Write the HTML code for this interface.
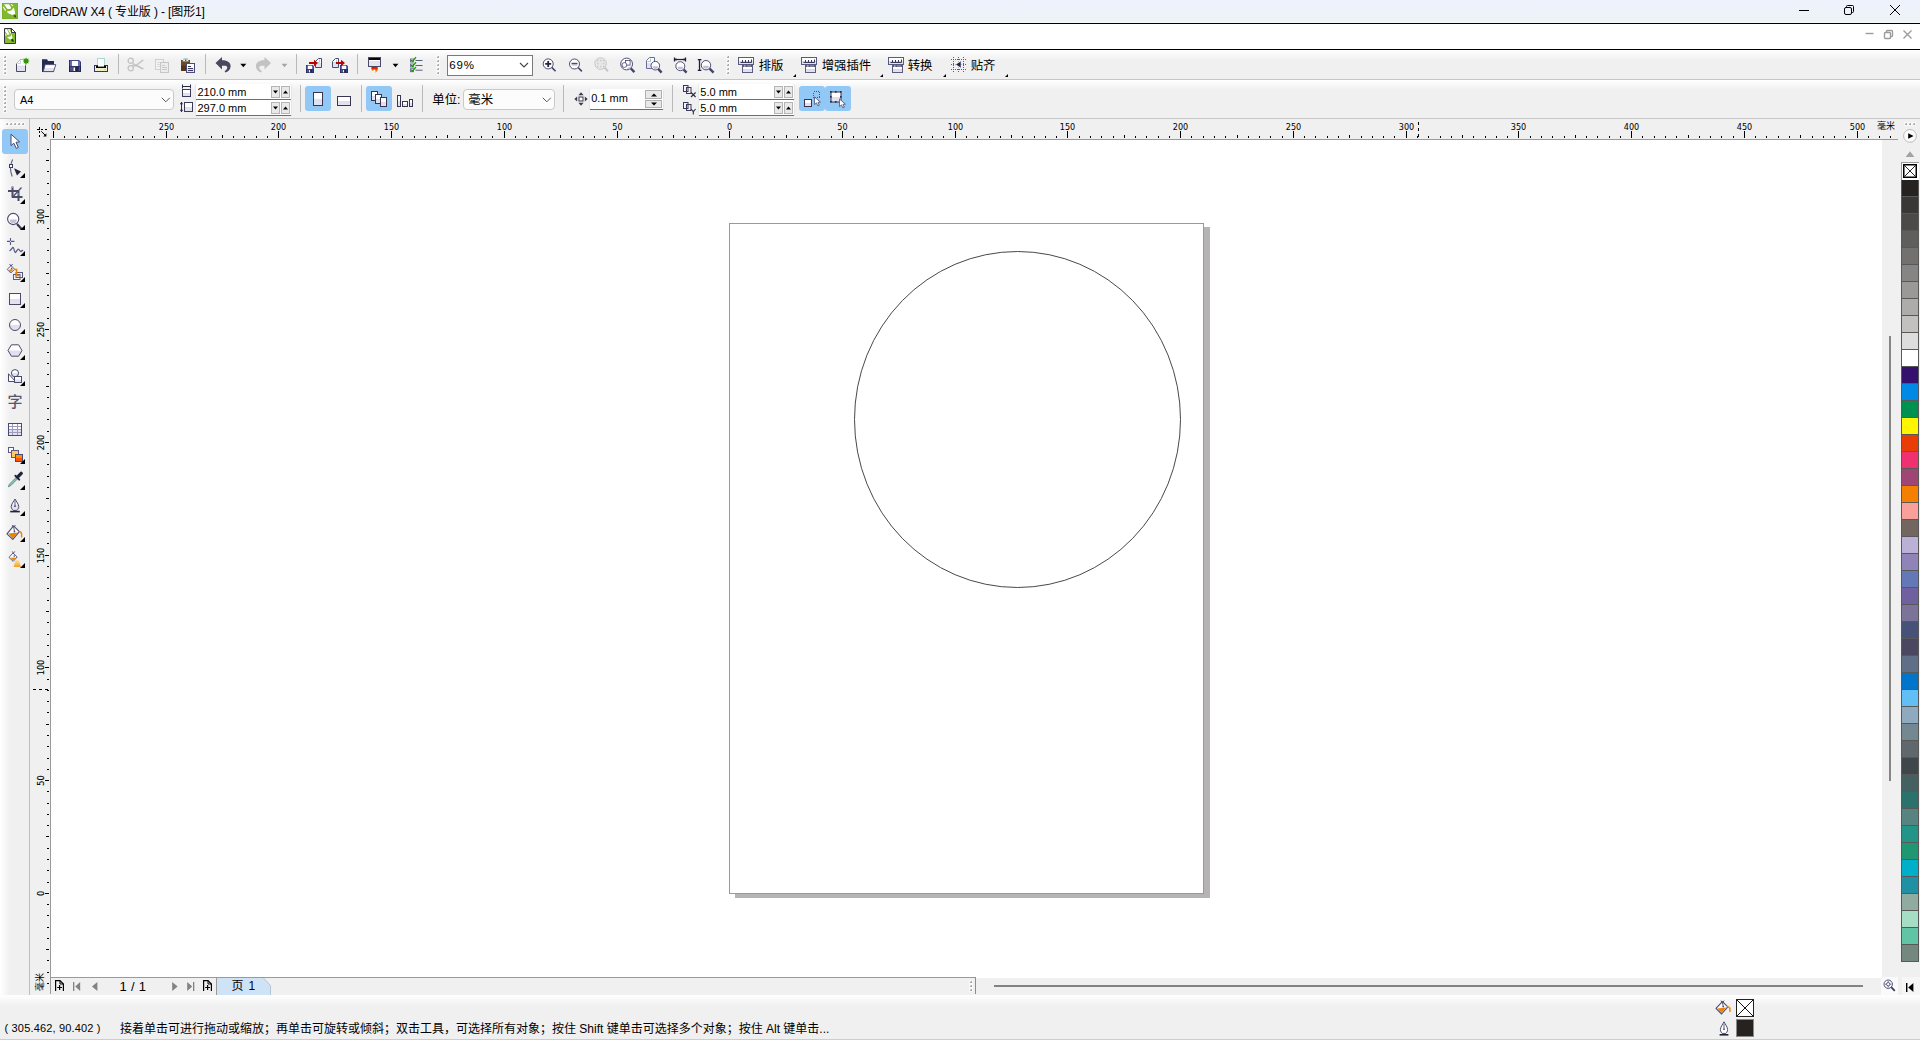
<!DOCTYPE html>
<html lang="zh-CN"><head><meta charset="utf-8"><title>CorelDRAW X4</title>
<style>
*{box-sizing:border-box;margin:0;padding:0}
html,body{width:1920px;height:1040px;overflow:hidden}
body{position:relative;background:#f0f0f0;font-family:"Liberation Sans","Noto Sans CJK SC",sans-serif;font-size:12px;color:#000}
.a{position:absolute}
.t{position:absolute;white-space:nowrap;line-height:1}
svg{position:absolute;overflow:visible}
.sep{position:absolute;width:1px;background:#b9b9b9}
.grip i{position:absolute;width:2px;height:2px;background:#b4b4b4}
</style></head>
<body>
<div class="a" style="left:0px;top:0px;width:1920px;height:23px;background:linear-gradient(#eef2fb 0,#eef3fa 12px,#edf3f6 21px,#f6f9fb 23px)"></div>
<div class="a" style="left:0px;top:23px;width:1920px;height:1px;background:#000"></div>
<div class="a" style="left:0px;top:24px;width:1920px;height:25px;background:#fff"></div>
<div class="a" style="left:0px;top:49px;width:1920px;height:1px;background:#000"></div>
<div class="a" style="left:0px;top:50px;width:1920px;height:29px;background:linear-gradient(#fff 0,#f0f0f0 10px)"></div>
<div class="a" style="left:0px;top:79px;width:1920px;height:1px;background:#c6c6c6"></div>
<div class="a" style="left:0px;top:80px;width:1920px;height:38px;background:linear-gradient(#fff 0,#f0f0f0 10px)"></div>
<div class="a" style="left:0px;top:118px;width:1920px;height:1px;background:#c6c6c6"></div>
<div class="a" style="left:0px;top:119px;width:29px;height:876px;background:linear-gradient(90deg,#fff 0,#f0f0f0 10px)"></div>
<div class="a" style="left:29px;top:119px;width:1px;height:876px;background:#bdbdbd"></div>
<div class="a" style="left:50px;top:139px;width:1832px;height:839px;background:#fff;border-left:1px solid #9a9a9a;border-top:1px solid #9a9a9a;border-bottom:1px solid #9a9a9a"></div>
<svg style="left:2px;top:3px" width="16" height="16" viewBox="0 0 16 16"><rect x="0" y="0" width="16" height="16" fill="#74ad1e"/><rect x="0.6" y="0.6" width="14.8" height="14.8" fill="#82b730"/><path d="M2 1.2 H7 L9 4.3 L8.8 5.7 L5.5 5.9 Z" fill="#fff"/><path d="M9.2 1.1 L11.3 2.4 L10.7 3.2 L8.7 1.8 Z" fill="#fff"/><path d="M1.5 3.5 L4.1 7.3 L3.2 7.9 L0.9 4.2 Z" fill="#fff"/><path d="M5.1 8.2 L9.5 7.6 L11.5 4.5 L12.2 5.7 L13.2 10.7 L10.3 12 L5.7 9.9 Z" fill="#fff"/><path d="M11.4 12.4 L13.6 11.9 L14.2 14.6 L12.6 14.2 Z" fill="#33421a"/></svg>
<div class="t" style="left:23.5px;top:6px;font-size:12px;letter-spacing:-0.13px">CorelDRAW X4 ( 专业版 ) - [图形1]</div>
<svg style="left:1794px;top:0px" width="126" height="23" viewBox="0 0 126 23"><g stroke="#000" stroke-width="1" fill="none"><path d="M5 10.5 H15"/><rect x="50.5" y="7.5" width="7" height="7" rx="1.5"/><path d="M52.5 7.5 V6.5 Q52.5 5.5 53.5 5.5 H58.5 Q59.5 5.5 59.5 6.5 V11.5 Q59.5 12.5 58.5 12.5 H57.5"/><path d="M96 5 L106 15 M106 5 L96 15"/></g></svg>
<svg style="left:4px;top:28px" width="12" height="16" viewBox="0 0 12 16"><path d="M0.5 0.5 H7.5 L11.5 4.5 V15.5 H0.5 Z" fill="#82bb2e" stroke="#38383e" stroke-width="1"/><path d="M7.5 0.5 V4.5 H11.5 Z" fill="#fff" stroke="#38383e" stroke-width="1" stroke-linejoin="round"/><path d="M1.2 1.2 H3 L5.6 6.4 L3.6 7 L1.2 3.4 Z" fill="#fff"/><path d="M3.8 1.2 H5.6 L6.9 4.6 L6.5 6 Z" fill="#fff"/><path d="M1.2 4.8 L3 7.6 L1.2 7.8 Z" fill="#fff" opacity="0.8"/><path d="M3 9 L6.4 8.4 L7.6 6 L8.5 10 L7.6 11.6 L5.4 11.2 Z" fill="#fff"/><path d="M6.8 11.4 L9 11 L10 13.8 L8 13.6 Z" fill="#26330f"/></svg>
<svg style="left:1860px;top:26px" width="56" height="16" viewBox="0 0 56 16"><g stroke="#9c9c9c" stroke-width="1.4" fill="none"><path d="M5.5 7.5 H13.5"/><rect x="24.5" y="6.5" width="6" height="6" rx="1"/><path d="M26.5 6.5 V5.5 Q26.5 4.5 27.5 4.5 H31.5 Q32.5 4.5 32.5 5.5 V9.5 Q32.5 10.5 31.5 10.5 H30.5"/><path d="M43.5 4.5 L51.5 12.5 M51.5 4.5 L43.5 12.5"/></g></svg>
<svg width="0" height="0" style="left:0;top:0"><defs>
<linearGradient id="gPage" x1="0" y1="0" x2="0" y2="1"><stop offset="0.45" stop-color="#fff"/><stop offset="0.55" stop-color="#dedeee"/><stop offset="1" stop-color="#e4e4f0"/></linearGradient>
<linearGradient id="gGray" x1="0" y1="0" x2="0" y2="1"><stop offset="0.5" stop-color="#fff"/><stop offset="0.55" stop-color="#d8d8e4"/><stop offset="1" stop-color="#e6e6ee"/></linearGradient>
<linearGradient id="gFlame" x1="0" y1="0" x2="0" y2="1"><stop offset="0" stop-color="#e00000"/><stop offset="0.5" stop-color="#ff5a00"/><stop offset="1" stop-color="#ffe000"/></linearGradient>
<linearGradient id="gLens" x1="0" y1="0" x2="0" y2="1"><stop offset="0.5" stop-color="#fff"/><stop offset="0.55" stop-color="#c8c8d8"/><stop offset="1" stop-color="#dcdce8"/></linearGradient>
</defs></svg>
<div class="a grip" style="left:4px;top:56px;width:3px;height:20px"><i style="left:0px;top:0px;background:#ababab;box-shadow:0 0 0 1px rgba(255,255,255,.55)"></i><i style="left:0px;top:0px;width:1px;height:1px;background:#dcdcdc"></i><i style="left:0px;top:4px;background:#ababab;box-shadow:0 0 0 1px rgba(255,255,255,.55)"></i><i style="left:0px;top:4px;width:1px;height:1px;background:#dcdcdc"></i><i style="left:0px;top:8px;background:#ababab;box-shadow:0 0 0 1px rgba(255,255,255,.55)"></i><i style="left:0px;top:8px;width:1px;height:1px;background:#dcdcdc"></i><i style="left:0px;top:12px;background:#ababab;box-shadow:0 0 0 1px rgba(255,255,255,.55)"></i><i style="left:0px;top:12px;width:1px;height:1px;background:#dcdcdc"></i><i style="left:0px;top:16px;background:#ababab;box-shadow:0 0 0 1px rgba(255,255,255,.55)"></i><i style="left:0px;top:16px;width:1px;height:1px;background:#dcdcdc"></i></div>
<svg style="left:15px;top:56px" width="16" height="18" viewBox="0 0 16 18"><path d="M1.5 7.5 L5.5 3.5 H10.5 V15.5 H1.5 Z" fill="url(#gPage)" stroke="#4a4560" stroke-width="1"/><path d="M1.5 8 V7.5 L5.5 3.5 H10.5 V9.5" fill="none" stroke="#b4b4d8" stroke-width="1"/><path d="M2.5 7.5 H5.5 V4.5" fill="none" stroke="#bcd8d4" stroke-width="1"/><path d="M11.10 1.30 L11.90 3.06 L13.72 2.38 L13.04 4.20 L14.80 5.00 L13.04 5.80 L13.72 7.62 L11.90 6.94 L11.10 8.70 L10.30 6.94 L8.48 7.62 L9.16 5.80 L7.40 5.00 L9.16 4.20 L8.48 2.38 L10.30 3.06 Z" fill="#2f9600"/></svg>
<svg style="left:41px;top:56px" width="16" height="18" viewBox="0 0 16 18"><path d="M1 3.2 H6 L7 5 H13 V16 H1 Z" fill="#232b50"/><path d="M2.2 15.6 L4.2 8.6 H14.8 L12.6 15.6 Z" fill="url(#gPage)" stroke="#4a4a74" stroke-width="0.9"/></svg>
<svg style="left:69px;top:60px" width="12" height="12" viewBox="0 0 12 12"><g transform="translate(0,0) scale(1.0)"><path d="M0 0 H10 L12 2 V12 H0 Z" fill="#1f2450"/><path d="M0.8 0.6 H9.8 L11.3 2.1 V6 H0.8 Z" fill="#6a6ab8"/><rect x="3" y="1" width="6" height="5" fill="#fff"/><rect x="1" y="6.6" width="10" height="4.6" fill="#50508a"/><rect x="6.5" y="6.6" width="3.2" height="4.6" fill="#1f2850"/><rect x="4.6" y="7.6" width="1.4" height="3.4" fill="#fff"/></g></svg>
<svg style="left:93px;top:56px" width="16" height="18" viewBox="0 0 16 18"><rect x="4.5" y="2.5" width="7" height="8" fill="#fff" stroke="#a8d8d0" stroke-width="1"/><rect x="1.5" y="9.5" width="13" height="6" fill="#eeeecc" stroke="#3a3658" stroke-width="1"/><rect x="3" y="10" width="10" height="2" fill="#08080c"/><rect x="5" y="9" width="6" height="1.6" fill="#fff"/><rect x="11.4" y="13" width="1.4" height="1.2" fill="#f0d000"/></svg>
<div class="sep" style="left:118px;top:54px;height:20px"></div>
<svg style="left:126px;top:56px" width="20" height="18" viewBox="0 0 20 18"><g fill="none" stroke="#c2c2c2" stroke-width="1.3"><circle cx="4.7" cy="4.8" r="2.6"/><circle cx="4.7" cy="12.2" r="2.6"/></g><path d="M6.6 6.5 L10 8.5 L16.5 3.6 L18 4.4 L10.5 10 L6.4 10.7 Z" fill="#c9c9c9"/><path d="M6.6 10.5 L10 8.3 L18 12.6 L16.4 13.5 L10 10.2 Z" fill="#c2c2c2"/></svg>
<svg style="left:154px;top:56px" width="16" height="18" viewBox="0 0 16 18"><rect x="1.5" y="3.5" width="8" height="10" fill="#f2f2f2" stroke="#cfcfcf"/><path d="M3 6.5 H8 M3 8.5 H8 M3 10.5 H8" stroke="#dcdcdc"/><rect x="6.5" y="6.5" width="8" height="10" fill="#ececec" stroke="#c6c6c6"/><path d="M8 9.5 H11 M8 11.5 H13 M8 13.5 H13" stroke="#c9c9c9"/></svg>
<svg style="left:180px;top:56px" width="16" height="18" viewBox="0 0 16 18"><rect x="1" y="4" width="9" height="11" fill="#6b4a2a"/><rect x="1" y="9.5" width="9" height="5.5" fill="#553618"/><path d="M2.5 5.4 L3.6 2 H7.6 L8.8 5.4 Z" fill="#a8d8d8"/><path d="M3.2 5 Q5.6 2.6 8.1 5 Z" fill="#fff"/><circle cx="5.7" cy="4.2" r="0.8" fill="#33335a"/><rect x="6.5" y="7.5" width="8" height="9" fill="url(#gPage)" stroke="#4a4a78"/><path d="M8 10.5 H11 M8 12.5 H13 M8 14.5 H13" stroke="#3a3a60" stroke-width="1"/></svg>
<div class="sep" style="left:205px;top:54px;height:20px"></div>
<svg style="left:215px;top:56px" width="17" height="18" viewBox="0 0 17 18"><path d="M0.5 6.9 L7 0.9 V4.3 C12 4.1 16 6.6 15.6 10.5 C15.4 13.6 13 15.8 10.2 16.5 L9.7 15 C11.4 14 12.4 12.6 12.2 11.2 C11.9 9.8 10 9.6 7 9.8 V13.4 Z" fill="#4a4760"/></svg>
<svg style="left:240px;top:63px" width="7" height="5" viewBox="0 0 7 5"><path d="M0.3 0.8 H6.3 L3.3 4.2 Z" fill="#000"/></svg>
<svg style="left:255px;top:56px" width="17" height="18" viewBox="0 0 17 18"><g transform="translate(16.5,0) scale(-1,1)"><path d="M0.5 6.9 L7 0.9 V4.3 C12 4.1 16 6.6 15.6 10.5 C15.4 13.6 13 15.8 10.2 16.5 L9.7 15 C11.4 14 12.4 12.6 12.2 11.2 C11.9 9.8 10 9.6 7 9.8 V13.4 Z" fill="#c2c2c2"/></g></svg>
<svg style="left:281px;top:63px" width="7" height="5" viewBox="0 0 7 5"><path d="M0.6 0.8 H6.4 L3.5 4.2 Z" fill="#a4a4a4"/></svg>
<div class="sep" style="left:296px;top:54px;height:20px"></div>
<svg style="left:305px;top:56px" width="18" height="18" viewBox="0 0 18 18"><g transform="translate(10,2)"><path d="M0.5 9.5 V3.5 L3.5 0.5 H6.5 V9.5 Z" fill="url(#gPage)" stroke="#4a4a70" stroke-width="1"/><path d="M1.5 4.5 H4.5 V1.5" fill="none" stroke="#a8d8d0" stroke-width="0.9"/></g><g transform="translate(1,9) scale(0.6666666666666666)"><path d="M0 0 H10 L12 2 V12 H0 Z" fill="#1f2450"/><path d="M0.8 0.6 H9.8 L11.3 2.1 V6 H0.8 Z" fill="#6a6ab8"/><rect x="3" y="1" width="6" height="5" fill="#fff"/><rect x="1" y="6.6" width="10" height="4.6" fill="#50508a"/><rect x="6.5" y="6.6" width="3.2" height="4.6" fill="#1f2850"/><rect x="4.6" y="7.6" width="1.4" height="3.4" fill="#fff"/></g><g transform="translate(4,3.8)"><path d="M0 2.3 H5 V0 L9 3.2 L5 6.4 V4.1 H0 Z" fill="#c00000"/></g></svg>
<svg style="left:331px;top:56px" width="18" height="18" viewBox="0 0 18 18"><g transform="translate(1,2)"><path d="M0.5 9.5 V3.5 L3.5 0.5 H6.5 V9.5 Z" fill="url(#gPage)" stroke="#4a4a70" stroke-width="1"/><path d="M1.5 4.5 H4.5 V1.5" fill="none" stroke="#a8d8d0" stroke-width="0.9"/></g><g transform="translate(9,9) scale(0.6666666666666666)"><path d="M0 0 H10 L12 2 V12 H0 Z" fill="#1f2450"/><path d="M0.8 0.6 H9.8 L11.3 2.1 V6 H0.8 Z" fill="#6a6ab8"/><rect x="3" y="1" width="6" height="5" fill="#fff"/><rect x="1" y="6.6" width="10" height="4.6" fill="#50508a"/><rect x="6.5" y="6.6" width="3.2" height="4.6" fill="#1f2850"/><rect x="4.6" y="7.6" width="1.4" height="3.4" fill="#fff"/></g><g transform="translate(5,3.8)"><path d="M0 2.3 H5 V0 L9 3.2 L5 6.4 V4.1 H0 Z" fill="#c00000"/></g></svg>
<div class="sep" style="left:357px;top:54px;height:20px"></div>
<svg style="left:367px;top:56px" width="16" height="18" viewBox="0 0 16 18"><rect x="1.5" y="1.5" width="12" height="9" fill="#e4e4ee" stroke="#4a4a68"/><rect x="2" y="2" width="11" height="2" fill="#08080c"/><rect x="2" y="4" width="11" height="1" fill="#fff"/><path d="M4.5 11 H10.5 C11.5 13.5 10.5 16 7.8 17 C9.2 15 8.4 13.6 7.4 13.6 C6.6 13.6 6.2 14.4 6 15 C4.4 14 4 12.5 4.5 11 Z" fill="url(#gFlame)"/></svg>
<svg style="left:392px;top:63px" width="7" height="5" viewBox="0 0 7 5"><path d="M0.6 0.8 H6.4 L3.5 4.2 Z" fill="#000"/></svg>
<svg style="left:410px;top:56px" width="14" height="18" viewBox="0 0 14 18"><rect x="0.5" y="3.0" width="3" height="3" fill="#fff" stroke="#6a6a98" stroke-width="0.9"/><path d="M5.5 4.5 H12.5" stroke="#5a5a88" stroke-width="1"/><path d="M1 3.9 L2.3 5.5 L6 1.2999999999999998" fill="none" stroke="#1f9a00" stroke-width="1.3"/><rect x="0.5" y="8.0" width="3" height="3" fill="#fff" stroke="#6a6a98" stroke-width="0.9"/><path d="M5.5 9.5 H12.5" stroke="#5a5a88" stroke-width="1"/><path d="M1 8.9 L2.3 10.5 L6 6.3" fill="none" stroke="#1f9a00" stroke-width="1.3"/><rect x="0.5" y="12.7" width="3" height="3" fill="#fff" stroke="#6a6a98" stroke-width="0.9"/><path d="M5.5 14.2 H12.5" stroke="#5a5a88" stroke-width="1"/><path d="M1 13.6 L2.3 15.2 L6 11.0" fill="none" stroke="#1f9a00" stroke-width="1.3"/></svg>
<div class="a grip" style="left:437px;top:56px;width:3px;height:20px"><i style="left:0px;top:0px;background:#ababab;box-shadow:0 0 0 1px rgba(255,255,255,.55)"></i><i style="left:0px;top:0px;width:1px;height:1px;background:#dcdcdc"></i><i style="left:0px;top:4px;background:#ababab;box-shadow:0 0 0 1px rgba(255,255,255,.55)"></i><i style="left:0px;top:4px;width:1px;height:1px;background:#dcdcdc"></i><i style="left:0px;top:8px;background:#ababab;box-shadow:0 0 0 1px rgba(255,255,255,.55)"></i><i style="left:0px;top:8px;width:1px;height:1px;background:#dcdcdc"></i><i style="left:0px;top:12px;background:#ababab;box-shadow:0 0 0 1px rgba(255,255,255,.55)"></i><i style="left:0px;top:12px;width:1px;height:1px;background:#dcdcdc"></i><i style="left:0px;top:16px;background:#ababab;box-shadow:0 0 0 1px rgba(255,255,255,.55)"></i><i style="left:0px;top:16px;width:1px;height:1px;background:#dcdcdc"></i></div>
<div class="a" style="left:447px;top:55px;width:86px;height:21px;background:#fff;border:1px solid #7a7a7a"></div>
<div class="t" style="left:449.3px;top:60px;font-size:11.5px;letter-spacing:0.8px">69%</div>
<svg style="left:519px;top:61px" width="10" height="8" viewBox="0 0 10 8"><path d="M1 2 L5 6 L9 2" fill="none" stroke="#444" stroke-width="1.1"/></svg>
<svg style="left:540px;top:56px" width="18" height="18" viewBox="0 0 18 18"><path d="M11.74 11.44 L15.6 15.3" stroke="#44446c" stroke-width="1.6" stroke-linecap="butt"/><circle cx="8.2" cy="7.9" r="5" fill="#fff" stroke="#44446c" stroke-width="0.95"/><path d="M5.2 7.9 H11.2 M8.2 4.9 V10.9" stroke="#25253f" stroke-width="1.8"/></svg>
<svg style="left:566px;top:56px" width="18" height="18" viewBox="0 0 18 18"><path d="M12.04 11.54 L15.9 15.4" stroke="#44446c" stroke-width="1.6" stroke-linecap="butt"/><circle cx="8.5" cy="8" r="5" fill="#fff" stroke="#44446c" stroke-width="0.95"/><path d="M5.5 7.6 H11.5" stroke="#4a4a78" stroke-width="1.6"/><path d="M6 9.3 H11" stroke="#c8c8dc" stroke-width="1"/></svg>
<svg style="left:592px;top:56px" width="18" height="18" viewBox="0 0 18 18"><path d="M12.62 11.78 L16 15.3" stroke="#c6c6c6" stroke-width="2" stroke-linecap="butt"/><circle cx="8.6" cy="7.6" r="5.8" fill="#e6e6e6" stroke="#c6c6c6" stroke-width="0.95"/><rect x="5.2" y="4.2" width="1" height="1" fill="#b4b4b4"/><rect x="5.2" y="7.2" width="1" height="1" fill="#b4b4b4"/><rect x="5.2" y="10.2" width="1" height="1" fill="#b4b4b4"/><rect x="8.2" y="4.2" width="1" height="1" fill="#b4b4b4"/><rect x="8.2" y="10.2" width="1" height="1" fill="#b4b4b4"/><rect x="11.2" y="4.2" width="1" height="1" fill="#b4b4b4"/><rect x="11.2" y="7.2" width="1" height="1" fill="#b4b4b4"/><rect x="11.2" y="10.2" width="1" height="1" fill="#b4b4b4"/></svg>
<svg style="left:618px;top:56px" width="18" height="18" viewBox="0 0 18 18"><path d="M12.67 12.27 L16.4 16.2" stroke="#44446c" stroke-width="2.4" stroke-linecap="butt"/><circle cx="8.6" cy="8" r="5.9" fill="#fff" stroke="#44446c" stroke-width="0.95"/><rect x="7.5" y="4.5" width="4.6" height="4.6" fill="#fff" stroke="#44446c" stroke-width="0.8"/><circle cx="6.4" cy="9" r="2.4" fill="#fff" stroke="#44446c" stroke-width="0.8"/><path d="M8.6 11.6 Q10.8 12.4 13 9.6 Q12.6 12.6 9.8 13.2 Z" fill="#c8c8dc"/></svg>
<svg style="left:644px;top:56px" width="20" height="18" viewBox="0 0 20 18"><path d="M2.5 12.5 V4.5 L5.5 1.5 H10.5 V12.5 Z" fill="url(#gPage)" stroke="#6a6a98" stroke-width="1"/><path d="M3.5 5.5 H6.5 V2.5" fill="none" stroke="#8cc8b4" stroke-width="0.9"/><path d="M14.20 12.88 L17.6 16.6" stroke="#44446c" stroke-width="2.4" stroke-linecap="butt"/><circle cx="11.3" cy="9.7" r="4.3" fill="#fff" stroke="#44446c" stroke-width="0.95"/><path d="M8.63 10.22 A2.67 2.67 0 0 0 13.97 10.22 Z" fill="#c2c2d6"/></svg>
<svg style="left:672px;top:56px" width="18" height="18" viewBox="0 0 18 18"><path d="M2 3.5 H14" stroke="#1e1e3c" stroke-width="1.2"/><path d="M2.5 1.5 V5.5 M13.5 1.5 V5.5" stroke="#1e1e3c" stroke-width="1.3"/><path d="M4 2.4 V4.6 M12 2.4 V4.6" stroke="#1e1e3c" stroke-width="1"/><path d="M11.46 13.41 L14.6 16.6" stroke="#44446c" stroke-width="2.4" stroke-linecap="butt"/><circle cx="8.3" cy="10.2" r="4.5" fill="#fff" stroke="#44446c" stroke-width="0.95"/><path d="M5.51 10.74 A2.79 2.79 0 0 0 11.09 10.74 Z" fill="#c2c2d6"/></svg>
<svg style="left:697px;top:56px" width="18" height="18" viewBox="0 0 18 18"><path d="M2.5 3.5 V14.5" stroke="#1e1e3c" stroke-width="1.3"/><path d="M0.8 3.6 H4.4 M0.8 14.4 H4.4" stroke="#1e1e3c" stroke-width="1.4"/><path d="M12.37 12.48 L16.6 16.6" stroke="#44446c" stroke-width="2.4" stroke-linecap="butt"/><circle cx="9" cy="9.2" r="4.7" fill="#fff" stroke="#44446c" stroke-width="0.95"/><path d="M6.09 9.76 A2.91 2.91 0 0 0 11.91 9.76 Z" fill="#c2c2d6"/></svg>
<div class="a grip" style="left:727px;top:56px;width:3px;height:20px"><i style="left:0px;top:0px;background:#ababab;box-shadow:0 0 0 1px rgba(255,255,255,.55)"></i><i style="left:0px;top:0px;width:1px;height:1px;background:#dcdcdc"></i><i style="left:0px;top:4px;background:#ababab;box-shadow:0 0 0 1px rgba(255,255,255,.55)"></i><i style="left:0px;top:4px;width:1px;height:1px;background:#dcdcdc"></i><i style="left:0px;top:8px;background:#ababab;box-shadow:0 0 0 1px rgba(255,255,255,.55)"></i><i style="left:0px;top:8px;width:1px;height:1px;background:#dcdcdc"></i><i style="left:0px;top:12px;background:#ababab;box-shadow:0 0 0 1px rgba(255,255,255,.55)"></i><i style="left:0px;top:12px;width:1px;height:1px;background:#dcdcdc"></i><i style="left:0px;top:16px;background:#ababab;box-shadow:0 0 0 1px rgba(255,255,255,.55)"></i><i style="left:0px;top:16px;width:1px;height:1px;background:#dcdcdc"></i></div>
<svg style="left:738px;top:57px" width="16" height="16" viewBox="0 0 16 16"><rect x="0.5" y="0.5" width="15" height="7" fill="url(#gGray)" stroke="#5a5a80"/><path d="M2.5 5.5 H13.5" stroke="#3a3a5a" stroke-width="1"/><path d="M4.5 3 V5.5 M7.5 3 V5.5 M10.5 3 V5.5 M13.5 2.5 V5.5" stroke="#3a3a5a" stroke-width="1"/><rect x="4.5" y="7.5" width="10" height="8" fill="url(#gGray)" stroke="#5a5a80"/><rect x="5" y="8" width="9" height="2" fill="#5a5a80"/><path d="M6 9 H7.5 M9.5 9 H10.5 M11.5 9 H12.5" stroke="#fff" stroke-width="0.9"/></svg>
<div class="t" style="left:758.7px;top:60px;font-size:12.4px;">排版</div>
<svg style="left:793px;top:74px" width="3" height="3" viewBox="0 0 3 3"><path d="M3 0 V3 H0 Z" fill="#000"/></svg>
<svg style="left:801px;top:57px" width="16" height="16" viewBox="0 0 16 16"><rect x="0.5" y="0.5" width="15" height="7" fill="url(#gGray)" stroke="#5a5a80"/><path d="M2.5 5.5 H13.5" stroke="#3a3a5a" stroke-width="1"/><path d="M4.5 3 V5.5 M7.5 3 V5.5 M10.5 3 V5.5 M13.5 2.5 V5.5" stroke="#3a3a5a" stroke-width="1"/><rect x="4.5" y="7.5" width="10" height="8" fill="url(#gGray)" stroke="#5a5a80"/><rect x="5" y="8" width="9" height="2" fill="#5a5a80"/><path d="M6 9 H7.5 M9.5 9 H10.5 M11.5 9 H12.5" stroke="#fff" stroke-width="0.9"/></svg>
<div class="t" style="left:821.7px;top:60px;font-size:12.4px;">增强插件</div>
<svg style="left:880px;top:74px" width="3" height="3" viewBox="0 0 3 3"><path d="M3 0 V3 H0 Z" fill="#000"/></svg>
<svg style="left:888px;top:57px" width="16" height="16" viewBox="0 0 16 16"><rect x="0.5" y="0.5" width="15" height="7" fill="url(#gGray)" stroke="#5a5a80"/><path d="M2.5 5.5 H13.5" stroke="#3a3a5a" stroke-width="1"/><path d="M4.5 3 V5.5 M7.5 3 V5.5 M10.5 3 V5.5 M13.5 2.5 V5.5" stroke="#3a3a5a" stroke-width="1"/><rect x="4.5" y="7.5" width="10" height="8" fill="url(#gGray)" stroke="#5a5a80"/><rect x="5" y="8" width="9" height="2" fill="#5a5a80"/><path d="M6 9 H7.5 M9.5 9 H10.5 M11.5 9 H12.5" stroke="#fff" stroke-width="0.9"/></svg>
<div class="t" style="left:907.7px;top:60px;font-size:12.4px;">转换</div>
<svg style="left:943px;top:74px" width="3" height="3" viewBox="0 0 3 3"><path d="M3 0 V3 H0 Z" fill="#000"/></svg>
<div class="t" style="left:970.7px;top:60px;font-size:12.4px;">贴齐</div>
<svg style="left:1005px;top:74px" width="3" height="3" viewBox="0 0 3 3"><path d="M3 0 V3 H0 Z" fill="#000"/></svg>
<svg style="left:951px;top:57px" width="16" height="16" viewBox="0 0 16 16"><path d="M2.5 0 V15 M0 2.5 H15" stroke="#5a5a90" stroke-width="1" stroke-dasharray="1 1"/><path d="M7.5 0 V15 M0 7.5 H15" stroke="#5a5a90" stroke-width="1" stroke-dasharray="1 1"/><path d="M12.5 0 V15 M0 12.5 H15" stroke="#5a5a90" stroke-width="1" stroke-dasharray="1 1"/><rect x="3" y="3" width="9" height="9" fill="#f0f0f4" opacity="0.6"/><path d="M5 7.5 L9 5 V10 Z" fill="#22223a"/><path d="M9.5 4.5 V10.5" stroke="#5a5a90" stroke-width="1"/></svg>
<div class="a grip" style="left:4px;top:86px;width:3px;height:28px"><i style="left:0px;top:0px;background:#ababab;box-shadow:0 0 0 1px rgba(255,255,255,.55)"></i><i style="left:0px;top:0px;width:1px;height:1px;background:#dcdcdc"></i><i style="left:0px;top:4px;background:#ababab;box-shadow:0 0 0 1px rgba(255,255,255,.55)"></i><i style="left:0px;top:4px;width:1px;height:1px;background:#dcdcdc"></i><i style="left:0px;top:8px;background:#ababab;box-shadow:0 0 0 1px rgba(255,255,255,.55)"></i><i style="left:0px;top:8px;width:1px;height:1px;background:#dcdcdc"></i><i style="left:0px;top:12px;background:#ababab;box-shadow:0 0 0 1px rgba(255,255,255,.55)"></i><i style="left:0px;top:12px;width:1px;height:1px;background:#dcdcdc"></i><i style="left:0px;top:16px;background:#ababab;box-shadow:0 0 0 1px rgba(255,255,255,.55)"></i><i style="left:0px;top:16px;width:1px;height:1px;background:#dcdcdc"></i><i style="left:0px;top:20px;background:#ababab;box-shadow:0 0 0 1px rgba(255,255,255,.55)"></i><i style="left:0px;top:20px;width:1px;height:1px;background:#dcdcdc"></i><i style="left:0px;top:24px;background:#ababab;box-shadow:0 0 0 1px rgba(255,255,255,.55)"></i><i style="left:0px;top:24px;width:1px;height:1px;background:#dcdcdc"></i></div>
<div class="a" style="left:14px;top:89px;width:160px;height:21px;background:#fcfcfc;border:1px solid #c9c9c9;border-radius:4px"></div>
<div class="t" style="left:20px;top:94.5px;font-size:11px;">A4</div>
<svg style="left:161px;top:97px" width="10" height="6" viewBox="0 0 10 6"><path d="M0.8 0.8 L4.8 4.8 L8.8 0.8" fill="none" stroke="#555" stroke-width="1"/></svg>
<svg style="left:181px;top:84px" width="11" height="14" viewBox="0 0 11 14"><path d="M1.5 2.5 H9.5 M1.5 0.5 V4.5 M9.5 0.5 V4.5" stroke="#2a2a44" stroke-width="1" fill="none"/><rect x="1.5" y="5.5" width="8" height="7" fill="url(#gPage)" stroke="#3a3a5a"/></svg>
<svg style="left:179px;top:101px" width="15" height="12" viewBox="0 0 15 12"><path d="M2.5 1 V11" stroke="#2a2a44" stroke-width="1"/><path d="M0.8 3.2 L2.5 0.8 L4.2 3.2 Z M0.8 8.8 L2.5 11.2 L4.2 8.8 Z" fill="#2a2a44"/><rect x="5.5" y="1.5" width="8" height="9" fill="url(#gPage)" stroke="#3a3a5a"/></svg>
<div class="a" style="left:196px;top:84px;width:95px;height:16px;background:#fff;border-bottom:1px solid #6e6e6e;border-radius:2px 2px 0 0;box-shadow:1px 0 0 #e6e6e6, -1px 0 0 #e6e6e6"></div>
<div class="a" style="left:196px;top:100px;width:95px;height:16px;background:#fff;border-bottom:1px solid #6e6e6e;border-radius:2px 2px 0 0;box-shadow:1px 0 0 #e6e6e6, -1px 0 0 #e6e6e6"></div>
<div class="t" style="left:197.5px;top:87px;font-size:11px;letter-spacing:0px">210.0 mm</div>
<div class="t" style="left:197.5px;top:103px;font-size:11px;letter-spacing:0px">297.0 mm</div>
<div class="a" style="left:271px;top:85.5px;width:9px;height:12px;background:#e9e9e9;border:1px solid #b4b4b4"></div>
<svg style="left:273px;top:89.5px" width="5" height="4" viewBox="0 0 5 4"><path d="M0 0.6 L2.5 3.6 L5 0.6 Z" fill="#000"/></svg>
<div class="a" style="left:281px;top:85.5px;width:9px;height:12px;background:#e9e9e9;border:1px solid #b4b4b4"></div>
<svg style="left:283px;top:89.5px" width="5" height="4" viewBox="0 0 5 4"><path d="M0 3.4 L2.5 0.4 L5 3.4 Z" fill="#000"/></svg>
<div class="a" style="left:271px;top:101.5px;width:9px;height:12px;background:#e9e9e9;border:1px solid #b4b4b4"></div>
<svg style="left:273px;top:105.5px" width="5" height="4" viewBox="0 0 5 4"><path d="M0 0.6 L2.5 3.6 L5 0.6 Z" fill="#000"/></svg>
<div class="a" style="left:281px;top:101.5px;width:9px;height:12px;background:#e9e9e9;border:1px solid #b4b4b4"></div>
<svg style="left:283px;top:105.5px" width="5" height="4" viewBox="0 0 5 4"><path d="M0 3.4 L2.5 0.4 L5 3.4 Z" fill="#000"/></svg>
<div class="sep" style="left:300px;top:85px;height:27px"></div>
<div class="a" style="left:305px;top:86px;width:26px;height:25px;background:#91c8f6;border-radius:3px"></div>
<svg style="left:313px;top:92px" width="10" height="14" viewBox="0 0 10 14"><rect x="0.5" y="0.5" width="9" height="13" fill="url(#gPage)" stroke="#3a3450"/></svg>
<svg style="left:337px;top:96px" width="14" height="10" viewBox="0 0 14 10"><rect x="0.5" y="0.5" width="13" height="9" fill="url(#gPage)" stroke="#3a3450"/></svg>
<div class="sep" style="left:361px;top:85px;height:27px"></div>
<div class="a" style="left:366px;top:86px;width:26px;height:25px;background:#91c8f6;border-radius:3px"></div>
<svg style="left:371px;top:91px" width="16" height="16" viewBox="0 0 16 16"><rect x="0.5" y="0.5" width="6" height="9" fill="url(#gPage)" stroke="#3a3450"/><rect x="4.5" y="3.5" width="6" height="9" fill="url(#gPage)" stroke="#3a3450"/><rect x="9.5" y="6.5" width="6" height="9" fill="url(#gPage)" stroke="#3a3450"/></svg>
<svg style="left:397px;top:95px" width="16" height="12" viewBox="0 0 16 12"><rect x="0.5" y="0.5" width="3" height="11" fill="url(#gPage)" stroke="#3a3450"/><rect x="5.5" y="6.5" width="5" height="5" fill="url(#gPage)" stroke="#3a3450"/><rect x="12.5" y="4.5" width="3" height="7" fill="url(#gPage)" stroke="#3a3450"/></svg>
<div class="sep" style="left:422px;top:85px;height:27px"></div>
<div class="t" style="left:432.3px;top:94px;font-size:12.4px;">单位:</div>
<div class="a" style="left:463px;top:89px;width:92px;height:21px;background:#fcfcfc;border:1px solid #c9c9c9;border-radius:4px"></div>
<div class="t" style="left:468.3px;top:94px;font-size:12.4px;">毫米</div>
<svg style="left:542px;top:97px" width="10" height="6" viewBox="0 0 10 6"><path d="M0.8 0.8 L4.8 4.8 L8.8 0.8" fill="none" stroke="#555" stroke-width="1"/></svg>
<div class="sep" style="left:563px;top:85px;height:27px"></div>
<svg style="left:574px;top:92px" width="14" height="14" viewBox="0 0 14 14"><rect x="5" y="5" width="4" height="4" fill="#fff" stroke="#3a3a50" stroke-width="1"/><path d="M7 0.3 L9.6 3.2 H4.4 Z M7 13.7 L9.6 10.8 H4.4 Z M0.3 7 L3.2 4.4 V9.6 Z M13.7 7 L10.8 4.4 V9.6 Z" fill="#3a3a50"/></svg>
<div class="a" style="left:590px;top:89px;width:73px;height:21px;background:#fff;border-bottom:1px solid #6e6e6e;border-radius:2px 2px 0 0;box-shadow:1px 0 0 #e6e6e6, -1px 0 0 #e6e6e6"></div>
<div class="t" style="left:591.2px;top:93.3px;font-size:11px;letter-spacing:0px">0.1 mm</div>
<div class="a" style="left:645px;top:90px;width:17px;height:9px;background:#e9e9e9;border:1px solid #b0b0b0"></div>
<div class="a" style="left:645px;top:99.5px;width:17px;height:8.5px;background:#e9e9e9;border:1px solid #b0b0b0"></div>
<svg style="left:651px;top:92.5px" width="6" height="4" viewBox="0 0 6 4"><path d="M0 3.6 L3 0.4 L6 3.6 Z" fill="#000"/></svg>
<svg style="left:651px;top:102px" width="6" height="4" viewBox="0 0 6 4"><path d="M0 0.4 L3 3.6 L6 0.4 Z" fill="#000"/></svg>
<div class="sep" style="left:672px;top:85px;height:27px"></div>
<svg style="left:683px;top:84.5px" width="14" height="14" viewBox="0 0 14 14"><rect x="0.5" y="0.5" width="4.5" height="6" fill="#f4f4fa" stroke="#3a3a5a"/><rect x="3.5" y="2.5" width="4.5" height="6" fill="none" stroke="#3a3a5a"/><path d="M8 7.5 L12.6 12 M12.6 7.5 L8 12" stroke="#2a2a44" stroke-width="1.1"/></svg>
<svg style="left:683px;top:101.5px" width="14" height="14" viewBox="0 0 14 14"><rect x="0.5" y="0.5" width="4.5" height="6" fill="#f4f4fa" stroke="#3a3a5a"/><rect x="3.5" y="2.5" width="4.5" height="6" fill="none" stroke="#3a3a5a"/><path d="M8 7 L10.3 9.6 L12.6 7 M10.3 9.6 V12.6" stroke="#2a2a44" stroke-width="1.1" fill="none"/></svg>
<div class="a" style="left:699px;top:84px;width:95px;height:16px;background:#fff;border-bottom:1px solid #6e6e6e;border-radius:2px 2px 0 0;box-shadow:1px 0 0 #e6e6e6, -1px 0 0 #e6e6e6"></div>
<div class="a" style="left:699px;top:100px;width:95px;height:16px;background:#fff;border-bottom:1px solid #6e6e6e;border-radius:2px 2px 0 0;box-shadow:1px 0 0 #e6e6e6, -1px 0 0 #e6e6e6"></div>
<div class="t" style="left:700.3px;top:87px;font-size:11px;letter-spacing:0px">5.0 mm</div>
<div class="t" style="left:700.3px;top:103px;font-size:11px;letter-spacing:0px">5.0 mm</div>
<div class="a" style="left:774px;top:85.5px;width:9px;height:12px;background:#e9e9e9;border:1px solid #b4b4b4"></div>
<svg style="left:776px;top:89.5px" width="5" height="4" viewBox="0 0 5 4"><path d="M0 0.6 L2.5 3.6 L5 0.6 Z" fill="#000"/></svg>
<div class="a" style="left:784px;top:85.5px;width:9px;height:12px;background:#e9e9e9;border:1px solid #b4b4b4"></div>
<svg style="left:786px;top:89.5px" width="5" height="4" viewBox="0 0 5 4"><path d="M0 3.4 L2.5 0.4 L5 3.4 Z" fill="#000"/></svg>
<div class="a" style="left:774px;top:101.5px;width:9px;height:12px;background:#e9e9e9;border:1px solid #b4b4b4"></div>
<svg style="left:776px;top:105.5px" width="5" height="4" viewBox="0 0 5 4"><path d="M0 0.6 L2.5 3.6 L5 0.6 Z" fill="#000"/></svg>
<div class="a" style="left:784px;top:101.5px;width:9px;height:12px;background:#e9e9e9;border:1px solid #b4b4b4"></div>
<svg style="left:786px;top:105.5px" width="5" height="4" viewBox="0 0 5 4"><path d="M0 3.4 L2.5 0.4 L5 3.4 Z" fill="#000"/></svg>
<div class="a" style="left:799px;top:86px;width:26px;height:25px;background:#91c8f6;border-radius:3px"></div>
<div class="a" style="left:825px;top:86px;width:26px;height:25px;background:#91c8f6;border-radius:3px"></div>
<svg style="left:803px;top:90px" width="20" height="18" viewBox="0 0 20 18"><rect x="1.5" y="9.5" width="7" height="7" fill="url(#gPage)" stroke="#3a3450"/><rect x="10.5" y="1.5" width="6" height="6" fill="none" stroke="#4a5888" stroke-dasharray="1 1" shape-rendering="crispEdges"/><g transform="translate(11,6.5) scale(0.95)"><path d="M0.5 0.5 V8.6 L2.6 6.7 L4.1 9.9 L5.6 9.2 L4.2 6.1 L6.8 6 Z" fill="#fff" stroke="#55557a" stroke-width="0.9" stroke-linejoin="round"/></g></svg>
<svg style="left:830px;top:91px" width="18" height="18" viewBox="0 0 18 18"><rect x="1" y="1" width="10" height="10" fill="url(#gPage)" stroke="#3a3450"/><rect x="0" y="0" width="1.6" height="1.6" fill="#2a2a44"/><rect x="5" y="0" width="1.6" height="1.6" fill="#2a2a44"/><rect x="10" y="0" width="1.6" height="1.6" fill="#2a2a44"/><rect x="0" y="5" width="1.6" height="1.6" fill="#2a2a44"/><rect x="10" y="5" width="1.6" height="1.6" fill="#2a2a44"/><rect x="0" y="10" width="1.6" height="1.6" fill="#2a2a44"/><rect x="5" y="10" width="1.6" height="1.6" fill="#2a2a44"/><rect x="10" y="10" width="1.6" height="1.6" fill="#2a2a44"/><g transform="translate(9,7.5) scale(0.95)"><path d="M0.5 0.5 V8.6 L2.6 6.7 L4.1 9.9 L5.6 9.2 L4.2 6.1 L6.8 6 Z" fill="#fff" stroke="#55557a" stroke-width="0.9" stroke-linejoin="round"/></g></svg>
<svg style="left:0;top:0" width="1920" height="140" viewBox="0 0 1920 140" shape-rendering="crispEdges" fill="#000"><rect x="53" y="131" width="1" height="7"/><rect x="64" y="136" width="1" height="2"/><rect x="75" y="136" width="1" height="2"/><rect x="87" y="136" width="1" height="2"/><rect x="98" y="136" width="1" height="2"/><rect x="109" y="135" width="1" height="3"/><rect x="120" y="136" width="1" height="2"/><rect x="132" y="136" width="1" height="2"/><rect x="143" y="136" width="1" height="2"/><rect x="154" y="136" width="1" height="2"/><rect x="166" y="131" width="1" height="7"/><rect x="177" y="136" width="1" height="2"/><rect x="188" y="136" width="1" height="2"/><rect x="199" y="136" width="1" height="2"/><rect x="211" y="136" width="1" height="2"/><rect x="222" y="135" width="1" height="3"/><rect x="233" y="136" width="1" height="2"/><rect x="244" y="136" width="1" height="2"/><rect x="256" y="136" width="1" height="2"/><rect x="267" y="136" width="1" height="2"/><rect x="278" y="131" width="1" height="7"/><rect x="290" y="136" width="1" height="2"/><rect x="301" y="136" width="1" height="2"/><rect x="312" y="136" width="1" height="2"/><rect x="323" y="136" width="1" height="2"/><rect x="335" y="135" width="1" height="3"/><rect x="346" y="136" width="1" height="2"/><rect x="357" y="136" width="1" height="2"/><rect x="368" y="136" width="1" height="2"/><rect x="380" y="136" width="1" height="2"/><rect x="391" y="131" width="1" height="7"/><rect x="402" y="136" width="1" height="2"/><rect x="414" y="136" width="1" height="2"/><rect x="425" y="136" width="1" height="2"/><rect x="436" y="136" width="1" height="2"/><rect x="447" y="135" width="1" height="3"/><rect x="459" y="136" width="1" height="2"/><rect x="470" y="136" width="1" height="2"/><rect x="481" y="136" width="1" height="2"/><rect x="492" y="136" width="1" height="2"/><rect x="504" y="131" width="1" height="7"/><rect x="515" y="136" width="1" height="2"/><rect x="526" y="136" width="1" height="2"/><rect x="538" y="136" width="1" height="2"/><rect x="549" y="136" width="1" height="2"/><rect x="560" y="135" width="1" height="3"/><rect x="571" y="136" width="1" height="2"/><rect x="583" y="136" width="1" height="2"/><rect x="594" y="136" width="1" height="2"/><rect x="605" y="136" width="1" height="2"/><rect x="617" y="131" width="1" height="7"/><rect x="628" y="136" width="1" height="2"/><rect x="639" y="136" width="1" height="2"/><rect x="650" y="136" width="1" height="2"/><rect x="662" y="136" width="1" height="2"/><rect x="673" y="135" width="1" height="3"/><rect x="684" y="136" width="1" height="2"/><rect x="695" y="136" width="1" height="2"/><rect x="707" y="136" width="1" height="2"/><rect x="718" y="136" width="1" height="2"/><rect x="729" y="131" width="1" height="7"/><rect x="741" y="136" width="1" height="2"/><rect x="752" y="136" width="1" height="2"/><rect x="763" y="136" width="1" height="2"/><rect x="774" y="136" width="1" height="2"/><rect x="786" y="135" width="1" height="3"/><rect x="797" y="136" width="1" height="2"/><rect x="808" y="136" width="1" height="2"/><rect x="819" y="136" width="1" height="2"/><rect x="831" y="136" width="1" height="2"/><rect x="842" y="131" width="1" height="7"/><rect x="853" y="136" width="1" height="2"/><rect x="865" y="136" width="1" height="2"/><rect x="876" y="136" width="1" height="2"/><rect x="887" y="136" width="1" height="2"/><rect x="898" y="135" width="1" height="3"/><rect x="910" y="136" width="1" height="2"/><rect x="921" y="136" width="1" height="2"/><rect x="932" y="136" width="1" height="2"/><rect x="943" y="136" width="1" height="2"/><rect x="955" y="131" width="1" height="7"/><rect x="966" y="136" width="1" height="2"/><rect x="977" y="136" width="1" height="2"/><rect x="989" y="136" width="1" height="2"/><rect x="1000" y="136" width="1" height="2"/><rect x="1011" y="135" width="1" height="3"/><rect x="1022" y="136" width="1" height="2"/><rect x="1034" y="136" width="1" height="2"/><rect x="1045" y="136" width="1" height="2"/><rect x="1056" y="136" width="1" height="2"/><rect x="1067" y="131" width="1" height="7"/><rect x="1079" y="136" width="1" height="2"/><rect x="1090" y="136" width="1" height="2"/><rect x="1101" y="136" width="1" height="2"/><rect x="1113" y="136" width="1" height="2"/><rect x="1124" y="135" width="1" height="3"/><rect x="1135" y="136" width="1" height="2"/><rect x="1146" y="136" width="1" height="2"/><rect x="1158" y="136" width="1" height="2"/><rect x="1169" y="136" width="1" height="2"/><rect x="1180" y="131" width="1" height="7"/><rect x="1191" y="136" width="1" height="2"/><rect x="1203" y="136" width="1" height="2"/><rect x="1214" y="136" width="1" height="2"/><rect x="1225" y="136" width="1" height="2"/><rect x="1237" y="135" width="1" height="3"/><rect x="1248" y="136" width="1" height="2"/><rect x="1259" y="136" width="1" height="2"/><rect x="1270" y="136" width="1" height="2"/><rect x="1282" y="136" width="1" height="2"/><rect x="1293" y="131" width="1" height="7"/><rect x="1304" y="136" width="1" height="2"/><rect x="1315" y="136" width="1" height="2"/><rect x="1327" y="136" width="1" height="2"/><rect x="1338" y="136" width="1" height="2"/><rect x="1349" y="135" width="1" height="3"/><rect x="1361" y="136" width="1" height="2"/><rect x="1372" y="136" width="1" height="2"/><rect x="1383" y="136" width="1" height="2"/><rect x="1394" y="136" width="1" height="2"/><rect x="1406" y="131" width="1" height="7"/><rect x="1417" y="136" width="1" height="2"/><rect x="1428" y="136" width="1" height="2"/><rect x="1440" y="136" width="1" height="2"/><rect x="1451" y="136" width="1" height="2"/><rect x="1462" y="135" width="1" height="3"/><rect x="1473" y="136" width="1" height="2"/><rect x="1485" y="136" width="1" height="2"/><rect x="1496" y="136" width="1" height="2"/><rect x="1507" y="136" width="1" height="2"/><rect x="1518" y="131" width="1" height="7"/><rect x="1530" y="136" width="1" height="2"/><rect x="1541" y="136" width="1" height="2"/><rect x="1552" y="136" width="1" height="2"/><rect x="1564" y="136" width="1" height="2"/><rect x="1575" y="135" width="1" height="3"/><rect x="1586" y="136" width="1" height="2"/><rect x="1597" y="136" width="1" height="2"/><rect x="1609" y="136" width="1" height="2"/><rect x="1620" y="136" width="1" height="2"/><rect x="1631" y="131" width="1" height="7"/><rect x="1642" y="136" width="1" height="2"/><rect x="1654" y="136" width="1" height="2"/><rect x="1665" y="136" width="1" height="2"/><rect x="1676" y="136" width="1" height="2"/><rect x="1688" y="135" width="1" height="3"/><rect x="1699" y="136" width="1" height="2"/><rect x="1710" y="136" width="1" height="2"/><rect x="1721" y="136" width="1" height="2"/><rect x="1733" y="136" width="1" height="2"/><rect x="1744" y="131" width="1" height="7"/><rect x="1755" y="136" width="1" height="2"/><rect x="1766" y="136" width="1" height="2"/><rect x="1778" y="136" width="1" height="2"/><rect x="1789" y="136" width="1" height="2"/><rect x="1800" y="135" width="1" height="3"/><rect x="1812" y="136" width="1" height="2"/><rect x="1823" y="136" width="1" height="2"/><rect x="1834" y="136" width="1" height="2"/><rect x="1845" y="136" width="1" height="2"/><rect x="1857" y="131" width="1" height="7"/><rect x="1868" y="136" width="1" height="2"/><rect x="1879" y="136" width="1" height="2"/><rect x="1890" y="136" width="1" height="2"/></svg>
<div class="a" style="left:51px;top:120px;width:20px;height:12px;overflow:hidden"><div class="t" style="left:-17.5px;top:3px;font-family:'DejaVu Sans Condensed','DejaVu Sans','Liberation Sans',sans-serif;font-size:9px;line-height:9px;width:40px;text-align:center">300</div></div>
<div class="t" style="left:146.5px;top:123px;font-family:'DejaVu Sans Condensed','DejaVu Sans','Liberation Sans',sans-serif;font-size:9px;line-height:9px;width:40px;text-align:center">250</div>
<div class="t" style="left:258.5px;top:123px;font-family:'DejaVu Sans Condensed','DejaVu Sans','Liberation Sans',sans-serif;font-size:9px;line-height:9px;width:40px;text-align:center">200</div>
<div class="t" style="left:371.5px;top:123px;font-family:'DejaVu Sans Condensed','DejaVu Sans','Liberation Sans',sans-serif;font-size:9px;line-height:9px;width:40px;text-align:center">150</div>
<div class="t" style="left:484.5px;top:123px;font-family:'DejaVu Sans Condensed','DejaVu Sans','Liberation Sans',sans-serif;font-size:9px;line-height:9px;width:40px;text-align:center">100</div>
<div class="t" style="left:597.5px;top:123px;font-family:'DejaVu Sans Condensed','DejaVu Sans','Liberation Sans',sans-serif;font-size:9px;line-height:9px;width:40px;text-align:center">50</div>
<div class="t" style="left:709.5px;top:123px;font-family:'DejaVu Sans Condensed','DejaVu Sans','Liberation Sans',sans-serif;font-size:9px;line-height:9px;width:40px;text-align:center">0</div>
<div class="t" style="left:822.5px;top:123px;font-family:'DejaVu Sans Condensed','DejaVu Sans','Liberation Sans',sans-serif;font-size:9px;line-height:9px;width:40px;text-align:center">50</div>
<div class="t" style="left:935.5px;top:123px;font-family:'DejaVu Sans Condensed','DejaVu Sans','Liberation Sans',sans-serif;font-size:9px;line-height:9px;width:40px;text-align:center">100</div>
<div class="t" style="left:1047.5px;top:123px;font-family:'DejaVu Sans Condensed','DejaVu Sans','Liberation Sans',sans-serif;font-size:9px;line-height:9px;width:40px;text-align:center">150</div>
<div class="t" style="left:1160.5px;top:123px;font-family:'DejaVu Sans Condensed','DejaVu Sans','Liberation Sans',sans-serif;font-size:9px;line-height:9px;width:40px;text-align:center">200</div>
<div class="t" style="left:1273.5px;top:123px;font-family:'DejaVu Sans Condensed','DejaVu Sans','Liberation Sans',sans-serif;font-size:9px;line-height:9px;width:40px;text-align:center">250</div>
<div class="t" style="left:1386.5px;top:123px;font-family:'DejaVu Sans Condensed','DejaVu Sans','Liberation Sans',sans-serif;font-size:9px;line-height:9px;width:40px;text-align:center">300</div>
<div class="t" style="left:1498.5px;top:123px;font-family:'DejaVu Sans Condensed','DejaVu Sans','Liberation Sans',sans-serif;font-size:9px;line-height:9px;width:40px;text-align:center">350</div>
<div class="t" style="left:1611.5px;top:123px;font-family:'DejaVu Sans Condensed','DejaVu Sans','Liberation Sans',sans-serif;font-size:9px;line-height:9px;width:40px;text-align:center">400</div>
<div class="t" style="left:1724.5px;top:123px;font-family:'DejaVu Sans Condensed','DejaVu Sans','Liberation Sans',sans-serif;font-size:9px;line-height:9px;width:40px;text-align:center">450</div>
<div class="t" style="left:1837.5px;top:123px;font-family:'DejaVu Sans Condensed','DejaVu Sans','Liberation Sans',sans-serif;font-size:9px;line-height:9px;width:40px;text-align:center">500</div>
<div class="t" style="left:1877px;top:122px;font-size:9px;">毫米</div>
<svg style="left:0;top:0" width="50" height="1000" viewBox="0 0 50 1000" shape-rendering="crispEdges" fill="#000"><rect x="47" y="983" width="2" height="1"/><rect x="47" y="972" width="2" height="1"/><rect x="47" y="960" width="2" height="1"/><rect x="46" y="949" width="3" height="1"/><rect x="47" y="938" width="2" height="1"/><rect x="47" y="927" width="2" height="1"/><rect x="47" y="915" width="2" height="1"/><rect x="47" y="904" width="2" height="1"/><rect x="45" y="893" width="4" height="1"/><rect x="47" y="882" width="2" height="1"/><rect x="47" y="870" width="2" height="1"/><rect x="47" y="859" width="2" height="1"/><rect x="47" y="848" width="2" height="1"/><rect x="46" y="836" width="3" height="1"/><rect x="47" y="825" width="2" height="1"/><rect x="47" y="814" width="2" height="1"/><rect x="47" y="803" width="2" height="1"/><rect x="47" y="791" width="2" height="1"/><rect x="45" y="780" width="4" height="1"/><rect x="47" y="769" width="2" height="1"/><rect x="47" y="758" width="2" height="1"/><rect x="47" y="746" width="2" height="1"/><rect x="47" y="735" width="2" height="1"/><rect x="46" y="724" width="3" height="1"/><rect x="47" y="712" width="2" height="1"/><rect x="47" y="701" width="2" height="1"/><rect x="47" y="690" width="2" height="1"/><rect x="47" y="679" width="2" height="1"/><rect x="45" y="667" width="4" height="1"/><rect x="47" y="656" width="2" height="1"/><rect x="47" y="645" width="2" height="1"/><rect x="47" y="634" width="2" height="1"/><rect x="47" y="622" width="2" height="1"/><rect x="46" y="611" width="3" height="1"/><rect x="47" y="600" width="2" height="1"/><rect x="47" y="588" width="2" height="1"/><rect x="47" y="577" width="2" height="1"/><rect x="47" y="566" width="2" height="1"/><rect x="45" y="555" width="4" height="1"/><rect x="47" y="543" width="2" height="1"/><rect x="47" y="532" width="2" height="1"/><rect x="47" y="521" width="2" height="1"/><rect x="47" y="510" width="2" height="1"/><rect x="46" y="498" width="3" height="1"/><rect x="47" y="487" width="2" height="1"/><rect x="47" y="476" width="2" height="1"/><rect x="47" y="464" width="2" height="1"/><rect x="47" y="453" width="2" height="1"/><rect x="45" y="442" width="4" height="1"/><rect x="47" y="431" width="2" height="1"/><rect x="47" y="419" width="2" height="1"/><rect x="47" y="408" width="2" height="1"/><rect x="47" y="397" width="2" height="1"/><rect x="46" y="386" width="3" height="1"/><rect x="47" y="374" width="2" height="1"/><rect x="47" y="363" width="2" height="1"/><rect x="47" y="352" width="2" height="1"/><rect x="47" y="340" width="2" height="1"/><rect x="45" y="329" width="4" height="1"/><rect x="47" y="318" width="2" height="1"/><rect x="47" y="307" width="2" height="1"/><rect x="47" y="295" width="2" height="1"/><rect x="47" y="284" width="2" height="1"/><rect x="46" y="273" width="3" height="1"/><rect x="47" y="262" width="2" height="1"/><rect x="47" y="250" width="2" height="1"/><rect x="47" y="239" width="2" height="1"/><rect x="47" y="228" width="2" height="1"/><rect x="45" y="216" width="4" height="1"/><rect x="47" y="205" width="2" height="1"/><rect x="47" y="194" width="2" height="1"/><rect x="47" y="183" width="2" height="1"/><rect x="47" y="171" width="2" height="1"/><rect x="46" y="160" width="3" height="1"/><rect x="47" y="149" width="2" height="1"/></svg>
<div class="t" style="left:21px;top:888.5px;font-family:'DejaVu Sans Condensed','DejaVu Sans','Liberation Sans',sans-serif;font-size:9px;line-height:9px;width:40px;text-align:center;-webkit-text-stroke:0.12px #000;transform:rotate(-90deg)">0</div>
<div class="t" style="left:21px;top:775.5px;font-family:'DejaVu Sans Condensed','DejaVu Sans','Liberation Sans',sans-serif;font-size:9px;line-height:9px;width:40px;text-align:center;-webkit-text-stroke:0.12px #000;transform:rotate(-90deg)">50</div>
<div class="t" style="left:21px;top:662.5px;font-family:'DejaVu Sans Condensed','DejaVu Sans','Liberation Sans',sans-serif;font-size:9px;line-height:9px;width:40px;text-align:center;-webkit-text-stroke:0.12px #000;transform:rotate(-90deg)">100</div>
<div class="t" style="left:21px;top:550.5px;font-family:'DejaVu Sans Condensed','DejaVu Sans','Liberation Sans',sans-serif;font-size:9px;line-height:9px;width:40px;text-align:center;-webkit-text-stroke:0.12px #000;transform:rotate(-90deg)">150</div>
<div class="t" style="left:21px;top:437.5px;font-family:'DejaVu Sans Condensed','DejaVu Sans','Liberation Sans',sans-serif;font-size:9px;line-height:9px;width:40px;text-align:center;-webkit-text-stroke:0.12px #000;transform:rotate(-90deg)">200</div>
<div class="t" style="left:21px;top:324.5px;font-family:'DejaVu Sans Condensed','DejaVu Sans','Liberation Sans',sans-serif;font-size:9px;line-height:9px;width:40px;text-align:center;-webkit-text-stroke:0.12px #000;transform:rotate(-90deg)">250</div>
<div class="t" style="left:21px;top:211.5px;font-family:'DejaVu Sans Condensed','DejaVu Sans','Liberation Sans',sans-serif;font-size:9px;line-height:9px;width:40px;text-align:center;-webkit-text-stroke:0.12px #000;transform:rotate(-90deg)">300</div>
<div class="t" style="left:21px;top:977px;width:40px;height:10px;text-align:center;font-size:9px;transform:rotate(-90deg)">毫米</div>
<div class="a" style="left:1418px;top:122px;width:1px;height:3px;background:#000"></div>
<div class="a" style="left:1418px;top:128px;width:1px;height:3px;background:#000"></div>
<div class="a" style="left:1418px;top:134px;width:1px;height:3px;background:#000"></div>
<div class="a" style="left:33px;top:689px;width:3px;height:1px;background:#000"></div>
<div class="a" style="left:39px;top:689px;width:3px;height:1px;background:#000"></div>
<div class="a" style="left:45px;top:689px;width:3px;height:1px;background:#000"></div>
<svg style="left:36px;top:126px" width="12" height="12" viewBox="0 0 12 12"><g fill="#000" shape-rendering="crispEdges"><rect x="1" y="3" width="3" height="1"/><rect x="5" y="3" width="2" height="1"/><rect x="9" y="3" width="2" height="1"/><rect x="3" y="1" width="1" height="3"/><rect x="3" y="5" width="1" height="2"/><rect x="3" y="9" width="1" height="2"/></g><path d="M5.3 5.3 L9.6 9.6" stroke="#000" stroke-width="1"/><path d="M10.4 7.2 L10.4 10.4 L7.2 10.4 Z" fill="#000"/></svg>
<div class="a grip" style="left:6px;top:123px;width:20px;height:3px"><i style="left:0px;top:0px;background:#ababab;box-shadow:0 0 0 1px rgba(255,255,255,.55)"></i><i style="left:0px;top:0px;width:1px;height:1px;background:#dcdcdc"></i><i style="left:4px;top:0px;background:#ababab;box-shadow:0 0 0 1px rgba(255,255,255,.55)"></i><i style="left:4px;top:0px;width:1px;height:1px;background:#dcdcdc"></i><i style="left:8px;top:0px;background:#ababab;box-shadow:0 0 0 1px rgba(255,255,255,.55)"></i><i style="left:8px;top:0px;width:1px;height:1px;background:#dcdcdc"></i><i style="left:12px;top:0px;background:#ababab;box-shadow:0 0 0 1px rgba(255,255,255,.55)"></i><i style="left:12px;top:0px;width:1px;height:1px;background:#dcdcdc"></i><i style="left:16px;top:0px;background:#ababab;box-shadow:0 0 0 1px rgba(255,255,255,.55)"></i><i style="left:16px;top:0px;width:1px;height:1px;background:#dcdcdc"></i></div>
<div class="a" style="left:2px;top:129px;width:26px;height:25px;background:#91c8f6;border-radius:3px"></div>
<svg style="left:10px;top:133px" width="12" height="17" viewBox="0 0 12 17"><path d="M1 1.2 V12.6 L3.8 10.2 L6.3 15.4 L8.4 14.4 L6 9.3 L9.6 8.9 Z" fill="#fff" stroke="#4a4a6a" stroke-width="1" stroke-linejoin="round"/></svg>
<svg style="left:6px;top:157px" width="22" height="22" viewBox="0 0 22 22"><path d="M6.6 2.5 C4.2 7.5 4 14 6.2 19.5" fill="none" stroke="#5a5a80" stroke-width="1.1"/><rect x="3.5" y="7.5" width="3" height="3" fill="#fff" stroke="#3a3a5a"/><path d="M8 11.2 L15 14.6 L11 18.6 Z" fill="#22223a"/></svg>
<svg style="left:20px;top:173px" width="5" height="5" viewBox="0 0 5 5"><path d="M5 0 V5 H0 Z" fill="#000"/></svg>
<svg style="left:6px;top:183px" width="20" height="20" viewBox="0 0 20 20"><path d="M2 8 H13 M6.5 3.5 V14.5 M12.5 8 V18 M6 14 H16.5" stroke="#4a4a6a" stroke-width="2" fill="none"/><path d="M7.5 13 L15.5 4.5" stroke="#4a4a6a" stroke-width="1.2"/><path d="M6 4.5 H7.5 M11.5 11 H13" stroke="#8cc8b8" stroke-width="0.8"/></svg>
<svg style="left:20px;top:199px" width="5" height="5" viewBox="0 0 5 5"><path d="M5 0 V5 H0 Z" fill="#000"/></svg>
<svg style="left:6px;top:211px" width="20" height="22" viewBox="0 0 20 22"><path d="M11 13 L15.8 18.2" stroke="#3a3a58" stroke-width="2.2"/><circle cx="7.2" cy="8" r="5.6" fill="#fff" stroke="#4a4a6a" stroke-width="1.1"/><path d="M3.6 8.6 A3.6 3.6 0 0 0 10.8 8.6 Z" fill="#c2c2d6"/></svg>
<svg style="left:20px;top:225px" width="5" height="5" viewBox="0 0 5 5"><path d="M5 0 V5 H0 Z" fill="#000"/></svg>
<svg style="left:0px;top:233px" width="30" height="26" viewBox="0 0 30 26"><path d="M7 8.4 H14.4 M10.5 5 V12" stroke="#5a5a88" stroke-width="1.1"/><rect x="10" y="7.9" width="1" height="1" fill="#e8e8f4"/><path d="M10 17.6 L13 14.3 C14.1 14.3 14.3 19.5 15.2 19.5 C16.2 19.5 17.3 16.2 18.4 16.2 C19.4 16.2 20 18.6 20.8 18.6 L22.6 17.4" fill="none" stroke="#5a5a88" stroke-width="1.3" stroke-linejoin="round" stroke-linecap="round"/></svg>
<svg style="left:20px;top:251px" width="5" height="5" viewBox="0 0 5 5"><path d="M5 0 V5 H0 Z" fill="#000"/></svg>
<svg style="left:6px;top:261px" width="20" height="22" viewBox="0 0 20 22"><rect x="7.5" y="13.5" width="6.5" height="5" fill="#f4f4fa" stroke="#5a5a80"/><rect x="10" y="11.5" width="6.5" height="5" fill="none" stroke="#5a5a80"/><g transform="translate(0,1.6)"><path d="M1.2 6.8 L5 3 L8.6 6.6 L4.8 10.4 Z" fill="#fff" stroke="#5a5a80" stroke-width="1"/><path d="M2.4 7 L7.4 6.6 L4.8 9.6 Z" fill="#f08000"/><path d="M3.6 1.4 L5 3.4 L6.6 1.4" fill="none" stroke="#4a4a70" stroke-width="0.9"/><circle cx="5.6" cy="5.8" r="0.8" fill="#4a4a70"/></g><path d="M8.2 8.6 H10.6 V14.4 H14.4" fill="none" stroke="#f08000" stroke-width="1.5"/></svg>
<svg style="left:20px;top:277px" width="5" height="5" viewBox="0 0 5 5"><path d="M5 0 V5 H0 Z" fill="#000"/></svg>
<svg style="left:9px;top:293px" width="12" height="12" viewBox="0 0 12 12"><rect x="0.5" y="0.5" width="11" height="11" fill="url(#gPage)" stroke="#4a4a6a"/></svg>
<svg style="left:20px;top:303px" width="5" height="5" viewBox="0 0 5 5"><path d="M5 0 V5 H0 Z" fill="#000"/></svg>
<svg style="left:9px;top:319px" width="12" height="12" viewBox="0 0 12 12"><circle cx="6" cy="6" r="5.5" fill="url(#gPage)" stroke="#4a4a6a"/></svg>
<svg style="left:20px;top:329px" width="5" height="5" viewBox="0 0 5 5"><path d="M5 0 V5 H0 Z" fill="#000"/></svg>
<svg style="left:7px;top:344.4px" width="16" height="14" viewBox="0 0 16 14"><path d="M1 6.5 L4.4 0.8 H11.6 L15 6.5 L11.6 12.2 H4.4 Z" fill="url(#gPage)" stroke="#4a4a6a"/></svg>
<svg style="left:20px;top:355px" width="5" height="5" viewBox="0 0 5 5"><path d="M5 0 V5 H0 Z" fill="#000"/></svg>
<svg style="left:7px;top:367.5px" width="16" height="18" viewBox="0 0 16 18"><path d="M1.5 5.8 V13.5 H8.5 Z" fill="#fff" stroke="#4a4a6a"/><circle cx="8" cy="5.2" r="3.6" fill="url(#gPage)" stroke="#4a4a6a"/><rect x="7.5" y="8.5" width="7" height="6" fill="url(#gPage)" stroke="#4a4a6a"/></svg>
<svg style="left:20px;top:381px" width="5" height="5" viewBox="0 0 5 5"><path d="M5 0 V5 H0 Z" fill="#000"/></svg>
<div class="t" style="left:7.5px;top:393.8px;font-size:15px;color:#56566e;font-weight:500">字</div>
<svg style="left:8px;top:423px" width="14" height="13" viewBox="0 0 14 13"><rect x="0.5" y="0.5" width="13" height="12" fill="url(#gPage)" stroke="#4a4a70"/><path d="M4.5 1 V12 M9.5 1 V12 M1 3.5 H13 M1 6.5 H13 M1 9.5 H13" stroke="#9c9cc0" stroke-width="1"/><rect x="0.5" y="0.5" width="13" height="12" fill="none" stroke="#4a4a70"/></svg>
<svg style="left:8px;top:447px" width="16" height="16" viewBox="0 0 16 16"><defs><linearGradient id="gOr" x1="0" y1="0" x2="0" y2="1"><stop offset="0.5" stop-color="#ff9000"/><stop offset="0.55" stop-color="#ff5400"/></linearGradient></defs><rect x="0.5" y="0.5" width="5" height="5" fill="#fff" stroke="#5a5a88"/><rect x="3.5" y="3.5" width="7" height="7" fill="#ffc860" stroke="#5a5a88"/><rect x="7.5" y="7.5" width="7" height="7" fill="url(#gOr)" stroke="#4a4a78"/></svg>
<svg style="left:20px;top:459px" width="5" height="5" viewBox="0 0 5 5"><path d="M5 0 V5 H0 Z" fill="#000"/></svg>
<svg style="left:7px;top:471px" width="18" height="18" viewBox="0 0 18 18"><path d="M1.4 15.8 L2.2 13.4 L9 6.6 L10.4 8 L3.6 14.8 Z" fill="#8cc0b4" stroke="#4a8a80" stroke-width="0.8"/><path d="M8.4 4.8 L12.2 8.6" stroke="#22223a" stroke-width="2" stroke-linecap="round"/><path d="M11 5.6 L14.2 2.4" stroke="#22223a" stroke-width="3.4" stroke-linecap="round"/></svg>
<svg style="left:20px;top:485px" width="5" height="5" viewBox="0 0 5 5"><path d="M5 0 V5 H0 Z" fill="#000"/></svg>
<svg style="left:9px;top:498px" width="12" height="16" viewBox="0 0 12 16"><path d="M6 1 C4.6 3.5 2.2 6.5 2.2 8.6 C2.2 10.4 3.4 11.6 4.2 12.4 H7.8 C8.6 11.6 9.8 10.4 9.8 8.6 C9.8 6.5 7.4 3.5 6 1 Z" fill="url(#gPage)" stroke="#4a4a70" stroke-width="1"/><path d="M6 2.5 V7.5" stroke="#4a4a70" stroke-width="0.9"/><circle cx="6" cy="8.2" r="0.9" fill="#4a4a70"/><path d="M1.2 13.6 H10.8" stroke="#22223a" stroke-width="1.6"/></svg>
<svg style="left:20px;top:511px" width="5" height="5" viewBox="0 0 5 5"><path d="M5 0 V5 H0 Z" fill="#000"/></svg>
<svg style="left:6.2px;top:525.2px" width="18" height="18" viewBox="0 0 18 18"><path d="M1 8.8 L7.6 0.9 L13.4 6.6 L6.8 14.4 Z" fill="#fff" stroke="#4a4a70" stroke-width="1.1" stroke-linejoin="round"/><path d="M2.2 8.6 L11.8 7.4 L6.8 13.4 Z" fill="#f08000"/><path d="M6.2 0.2 L7.6 2.4 L9.4 0.2" fill="none" stroke="#4a4a70" stroke-width="1"/><path d="M7.8 2.6 L8.4 6.2" stroke="#4a4a70" stroke-width="0.9"/><circle cx="8.4" cy="6.6" r="0.9" fill="#4a4a70"/><path d="M12.6 6.4 C14.8 6.4 15.6 7.6 15.6 9.4 V12.6" fill="none" stroke="#f08000" stroke-width="1.4"/></svg>
<svg style="left:20px;top:537px" width="5" height="5" viewBox="0 0 5 5"><path d="M5 0 V5 H0 Z" fill="#000"/></svg>
<svg style="left:8px;top:550.5px" width="18" height="20" viewBox="0 0 18 20"><defs><linearGradient id="gTr" x1="0" y1="0" x2="0" y2="1"><stop offset="0" stop-color="#ffe4a8"/><stop offset="1" stop-color="#f0a020"/></linearGradient></defs><path d="M7.6 9 H10.8 L13 16 H5.6 Z" fill="url(#gTr)"/><path d="M1 6.4 L5 2 L9.2 6 L5.2 10.4 Z" fill="#fff" stroke="#5a5a80" stroke-width="1" stroke-linejoin="round"/><path d="M2.4 6.8 L8 6.4 L5.2 9.6 Z" fill="#f08000"/><path d="M4.2 0.4 L5.4 2.2 L6.8 0.4" fill="none" stroke="#4a4a70" stroke-width="0.9"/><circle cx="6.2" cy="5" r="0.8" fill="#4a4a70"/></svg>
<svg style="left:20px;top:563px" width="5" height="5" viewBox="0 0 5 5"><path d="M5 0 V5 H0 Z" fill="#000"/></svg>
<div class="a" style="left:735px;top:227px;width:475px;height:671px;background:#b5b3b3"></div>
<div class="a" style="left:729px;top:223px;width:475px;height:671px;background:#fff;border:1px solid #999"></div>
<svg style="left:850px;top:247px" width="336" height="346" viewBox="0 0 336 346"><ellipse cx="167.5" cy="172.5" rx="163" ry="168" fill="none" stroke="#4a4848" stroke-width="1"/></svg>
<div class="a" style="left:1882px;top:140px;width:18px;height:838px;background:#f0f0f0"></div>
<div class="a" style="left:1889px;top:336px;width:2px;height:445px;background:#868686"></div>
<div class="a" style="left:1882px;top:139px;width:16px;height:1px;background:#9a9a9a"></div>
<div class="a" style="left:1900px;top:119px;width:20px;height:876px;background:#f0f0f0"></div>
<div class="a grip" style="left:1905px;top:123px;width:12px;height:3px"><i style="left:0px;top:0px;background:#ababab;box-shadow:0 0 0 1px rgba(255,255,255,.55)"></i><i style="left:0px;top:0px;width:1px;height:1px;background:#dcdcdc"></i><i style="left:4px;top:0px;background:#ababab;box-shadow:0 0 0 1px rgba(255,255,255,.55)"></i><i style="left:4px;top:0px;width:1px;height:1px;background:#dcdcdc"></i><i style="left:8px;top:0px;background:#ababab;box-shadow:0 0 0 1px rgba(255,255,255,.55)"></i><i style="left:8px;top:0px;width:1px;height:1px;background:#dcdcdc"></i></div>
<svg style="left:1903px;top:129px" width="14" height="14" viewBox="0 0 14 14"><circle cx="7" cy="6.9" r="6.4" fill="#fbfbfb" stroke="#bcbcbc" stroke-width="1"/><path d="M5.2 4.2 L10.6 7 L5.2 9.8 Z" fill="#000"/></svg>
<svg style="left:1905px;top:151px" width="10" height="6" viewBox="0 0 10 6"><path d="M0.6 6 L5 0.2 L9.4 6 Z" fill="#a3a3a3"/></svg>
<div class="a" style="left:1901px;top:162px;width:18px;height:18px;background:#fff;border-left:1px solid #9a9a9a;border-top:1px solid #9a9a9a"></div>
<svg style="left:1903px;top:164px" width="15" height="15" viewBox="0 0 15 15"><rect x="0.75" y="0.75" width="12.5" height="12.5" fill="#fff" stroke="#000" stroke-width="1.5"/><path d="M1.5 1.5 L12.5 12.5 M12.5 1.5 L1.5 12.5" stroke="#111" stroke-width="0.9"/></svg>
<div class="a" style="left:1901px;top:180px;width:18px;height:782px;background:#585858"></div>
<div class="a" style="left:1902px;top:180px;width:16px;height:16px;background:#25221f"></div>
<div class="a" style="left:1902px;top:197px;width:16px;height:16px;background:#3a3735"></div>
<div class="a" style="left:1902px;top:214px;width:16px;height:16px;background:#4c4a49"></div>
<div class="a" style="left:1902px;top:231px;width:16px;height:16px;background:#5f5e5d"></div>
<div class="a" style="left:1902px;top:248px;width:16px;height:16px;background:#727170"></div>
<div class="a" style="left:1902px;top:265px;width:16px;height:16px;background:#868585"></div>
<div class="a" style="left:1902px;top:282px;width:16px;height:16px;background:#9a9998"></div>
<div class="a" style="left:1902px;top:299px;width:16px;height:16px;background:#adacab"></div>
<div class="a" style="left:1902px;top:316px;width:16px;height:16px;background:#c2c1c0"></div>
<div class="a" style="left:1902px;top:333px;width:16px;height:16px;background:#dddddd"></div>
<div class="a" style="left:1902px;top:350px;width:16px;height:16px;background:#ffffff"></div>
<div class="a" style="left:1902px;top:367px;width:16px;height:16px;background:#35106f"></div>
<div class="a" style="left:1902px;top:384px;width:16px;height:16px;background:#008ae6"></div>
<div class="a" style="left:1902px;top:401px;width:16px;height:16px;background:#009150"></div>
<div class="a" style="left:1902px;top:418px;width:16px;height:16px;background:#fff500"></div>
<div class="a" style="left:1902px;top:435px;width:16px;height:16px;background:#e83e06"></div>
<div class="a" style="left:1902px;top:452px;width:16px;height:16px;background:#f0306f"></div>
<div class="a" style="left:1902px;top:469px;width:16px;height:16px;background:#9e4674"></div>
<div class="a" style="left:1902px;top:486px;width:16px;height:16px;background:#f58000"></div>
<div class="a" style="left:1902px;top:503px;width:16px;height:16px;background:#f9a09b"></div>
<div class="a" style="left:1902px;top:520px;width:16px;height:16px;background:#736560"></div>
<div class="a" style="left:1902px;top:537px;width:16px;height:16px;background:#bbb0d6"></div>
<div class="a" style="left:1902px;top:554px;width:16px;height:16px;background:#8f83b7"></div>
<div class="a" style="left:1902px;top:571px;width:16px;height:16px;background:#6477b7"></div>
<div class="a" style="left:1902px;top:588px;width:16px;height:16px;background:#7060a0"></div>
<div class="a" style="left:1902px;top:605px;width:16px;height:16px;background:#7c7399"></div>
<div class="a" style="left:1902px;top:622px;width:16px;height:16px;background:#475279"></div>
<div class="a" style="left:1902px;top:639px;width:16px;height:16px;background:#4b4760"></div>
<div class="a" style="left:1902px;top:656px;width:16px;height:16px;background:#5f6f88"></div>
<div class="a" style="left:1902px;top:673px;width:16px;height:16px;background:#0075c9"></div>
<div class="a" style="left:1902px;top:690px;width:16px;height:16px;background:#62bff5"></div>
<div class="a" style="left:1902px;top:707px;width:16px;height:16px;background:#8fa9bf"></div>
<div class="a" style="left:1902px;top:724px;width:16px;height:16px;background:#748892"></div>
<div class="a" style="left:1902px;top:741px;width:16px;height:16px;background:#5e686d"></div>
<div class="a" style="left:1902px;top:758px;width:16px;height:16px;background:#40474a"></div>
<div class="a" style="left:1902px;top:775px;width:16px;height:16px;background:#456060"></div>
<div class="a" style="left:1902px;top:792px;width:16px;height:16px;background:#2b726c"></div>
<div class="a" style="left:1902px;top:809px;width:16px;height:16px;background:#578381"></div>
<div class="a" style="left:1902px;top:826px;width:16px;height:16px;background:#229488"></div>
<div class="a" style="left:1902px;top:843px;width:16px;height:16px;background:#209773"></div>
<div class="a" style="left:1902px;top:860px;width:16px;height:16px;background:#00afc9"></div>
<div class="a" style="left:1902px;top:877px;width:16px;height:16px;background:#2090a4"></div>
<div class="a" style="left:1902px;top:894px;width:16px;height:16px;background:#90aca0"></div>
<div class="a" style="left:1902px;top:911px;width:16px;height:16px;background:#a5dec5"></div>
<div class="a" style="left:1902px;top:928px;width:16px;height:16px;background:#61c4a4"></div>
<div class="a" style="left:1902px;top:945px;width:16px;height:16px;background:#73897e"></div>
<div class="a" style="left:976px;top:977px;width:944px;height:18px;background:#f0f0f0"></div>
<div class="a" style="left:976px;top:977px;width:906px;height:1px;background:#fff"></div>
<div class="a" style="left:51px;top:978px;width:924px;height:17px;background:#f0f0f0"></div>
<div class="a" style="left:975px;top:977px;width:1px;height:17px;background:#8c8c8c"></div>
<div class="a" style="left:50px;top:977px;width:1px;height:17px;background:#9a9a9a"></div>
<svg style="left:55px;top:980px" width="9" height="11" viewBox="0 0 9 11"><path d="M0.6 11 V0.6 H5 L8.4 4 V11" fill="none" stroke="#000" stroke-width="1.2"/><path d="M5 0.6 V4 H8.4" fill="none" stroke="#000" stroke-width="1"/><path d="M2.2 7.5 H7 M4.6 5 V10" stroke="#000" stroke-width="1.2"/></svg>
<svg style="left:203px;top:980px" width="9" height="11" viewBox="0 0 9 11"><path d="M0.6 11 V0.6 H5 L8.4 4 V11" fill="none" stroke="#000" stroke-width="1.2"/><path d="M5 0.6 V4 H8.4" fill="none" stroke="#000" stroke-width="1"/><path d="M2.2 7.5 H7 M4.6 5 V10" stroke="#000" stroke-width="1.2"/></svg>
<svg style="left:73px;top:982px" width="8" height="9" viewBox="0 0 8 9"><rect x="0" y="0" width="1.3" height="9" fill="#828282"/><path d="M2.2 4.5 L7.2 0 V9 Z" fill="#828282"/></svg>
<svg style="left:92px;top:982px" width="6" height="9" viewBox="0 0 6 9"><path d="M0 4.5 L5.4 0 V9 Z" fill="#828282"/></svg>
<div class="t" style="left:119.5px;top:980px;font-size:13px;word-spacing:0.6px">1 / 1</div>
<svg style="left:172px;top:982px" width="6" height="9" viewBox="0 0 6 9"><path d="M5.6 4.5 L0.2 0 V9 Z" fill="#828282"/></svg>
<svg style="left:187px;top:982px" width="8" height="9" viewBox="0 0 8 9"><rect x="6" y="0" width="1.3" height="9" fill="#828282"/><path d="M5.2 4.5 L0.2 0 V9 Z" fill="#828282"/></svg>
<svg style="left:216px;top:978px" width="56" height="17" viewBox="0 0 56 17"><path d="M0.5 0 V17 H54.5 V7.5 L47.5 0 Z" fill="#cfe3f7"/><path d="M0.5 0 V17" stroke="#9a9a9a" stroke-width="1"/><path d="M47.5 0 L54.5 7.5 V17" fill="none" stroke="#b4c4d4" stroke-width="1"/></svg>
<div class="t" style="left:231.5px;top:980px;font-size:12px;word-spacing:1.6px">页 1</div>
<div class="a grip" style="left:970px;top:981px;width:3px;height:12px"><i style="left:0px;top:0px;background:#ababab;box-shadow:0 0 0 1px rgba(255,255,255,.55)"></i><i style="left:0px;top:0px;width:1px;height:1px;background:#dcdcdc"></i><i style="left:0px;top:4px;background:#ababab;box-shadow:0 0 0 1px rgba(255,255,255,.55)"></i><i style="left:0px;top:4px;width:1px;height:1px;background:#dcdcdc"></i><i style="left:0px;top:8px;background:#ababab;box-shadow:0 0 0 1px rgba(255,255,255,.55)"></i><i style="left:0px;top:8px;width:1px;height:1px;background:#dcdcdc"></i></div>
<div class="a" style="left:994px;top:985px;width:869px;height:2px;background:#828282"></div>
<div class="a" style="left:1881px;top:977px;width:17px;height:18px;background:#fafafa"></div>
<svg style="left:1883px;top:979px" width="13" height="13" viewBox="0 0 13 13"><path d="M8.2 8.2 L11.8 11.8" stroke="#3a3a60" stroke-width="1.8"/><circle cx="5.2" cy="5.2" r="4.2" fill="#fff" stroke="#4a4a78" stroke-width="1"/><circle cx="5.2" cy="5.2" r="1.7" fill="none" stroke="#4a4a78" stroke-width="0.9"/><path d="M5.2 2 V3.4 M5.2 7 V8.4 M2 5.2 H3.4 M7 5.2 H8.4" stroke="#4a4a78" stroke-width="0.8"/></svg>
<div class="a" style="left:1902px;top:977px;width:18px;height:18px;background:#f6f6f6"></div>
<svg style="left:1906px;top:983px" width="8" height="9" viewBox="0 0 8 9"><rect x="0" y="0" width="1.4" height="9" fill="#000"/><path d="M2.2 4.5 L7.4 0 V9 Z" fill="#000"/></svg>
<div class="a" style="left:0px;top:995px;width:1920px;height:45px;background:linear-gradient(#fff 0,#f0f0f0 11px)"></div>
<div class="a" style="left:0px;top:1039px;width:1920px;height:1px;background:#cdcdcd"></div>
<div class="t" style="left:4.5px;top:1023px;font-size:11px;letter-spacing:0.17px">( 305.462, 90.402 )</div>
<div class="t" style="left:120px;top:1023px;font-size:12px;">接着单击可进行拖动或缩放；再单击可旋转或倾斜；双击工具，可选择所有对象；按住 Shift 键单击可选择多个对象；按住 Alt 键单击...</div>
<svg style="left:1715px;top:1000px" width="17" height="17" viewBox="0 0 17 17"><path d="M1 8.4 L7.4 1.6 L12.8 6.8 L6.6 14 Z" fill="#fff" stroke="#4a4a70" stroke-width="1.1" stroke-linejoin="round"/><path d="M2.2 8.6 L11.4 7.4 L6.6 13 Z" fill="#f08000"/><path d="M6 0.6 L7.4 2.8 L9 0.6" fill="none" stroke="#4a4a70" stroke-width="1"/><path d="M7.6 3 L8.2 6.2" stroke="#4a4a70" stroke-width="0.9"/><circle cx="8.2" cy="6.6" r="0.9" fill="#4a4a70"/><path d="M12 6.6 C14.2 6.6 15 7.8 15 9.4 V12" fill="none" stroke="#f08000" stroke-width="1.4"/></svg>
<svg style="left:1736px;top:999px" width="18" height="18" viewBox="0 0 18 18"><rect x="0.5" y="0.5" width="17" height="17" fill="#fff" stroke="#222"/><path d="M1 1 L17 17 M17 1 L1 17" stroke="#111" stroke-width="1"/></svg>
<svg style="left:1718px;top:1021px" width="12" height="16" viewBox="0 0 12 16"><path d="M6 0.8 C4.6 3.3 2.4 6.3 2.4 8.6 C2.4 10.4 3.4 11.6 4.2 12.4 H7.8 C8.6 11.6 9.6 10.4 9.6 8.6 C9.6 6.3 7.4 3.3 6 0.8 Z" fill="#fff" stroke="#4a4a70" stroke-width="1"/><path d="M6 2.5 V7.5" stroke="#4a4a70" stroke-width="0.9"/><circle cx="6" cy="8.2" r="0.9" fill="#4a4a70"/><path d="M1.6 13.8 H10.4" stroke="#22223a" stroke-width="1.6"/></svg>
<div class="a" style="left:1736px;top:1019px;width:18px;height:18px;background:#25221f;border:1px solid #8a8a8a"></div>
</body></html>
